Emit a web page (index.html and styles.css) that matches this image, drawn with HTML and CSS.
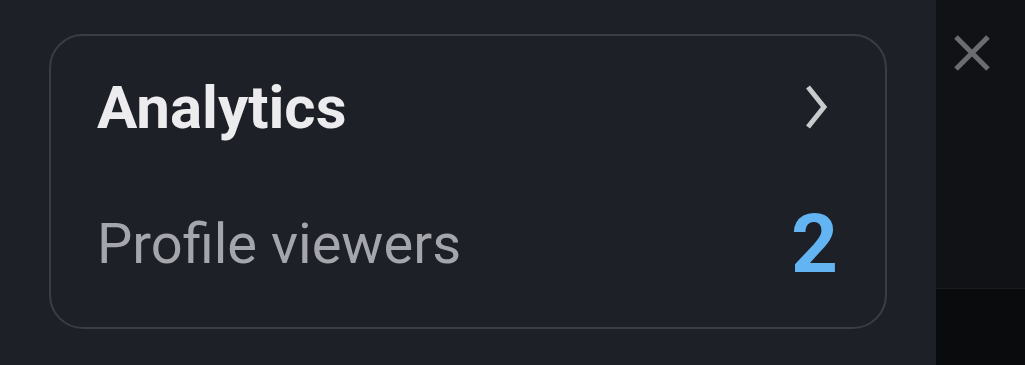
FILE: index.html
```html
<!DOCTYPE html>
<html lang="en">
<head>
  <meta charset="UTF-8">
  <meta name="viewport" content="width=device-width, initial-scale=1.0">
  <title>Analytics</title>
  <link rel="stylesheet" href="styles.css">
</head>
<body>

  <div class="panel">
    <div class="card">
      <a class="row row-title" href="#">
        <span class="title">Analytics</span>
        <svg class="chevron" width="24" height="46" viewBox="0 0 24 46">
          <path d="M4 3 L20 23 L4 43" fill="none" stroke="#c9cacc" stroke-width="5"/>
        </svg>
      </a>
      <div class="row row-stat">
        <span class="label">Profile viewers</span>
        <span class="count">2</span>
      </div>
    </div>
  </div>

  <div class="side">
    <div class="side-top">
      <button class="close" aria-label="Close">
        <svg width="38" height="38" viewBox="0 0 38 38">
          <path d="M3 3 L35 35 M35 3 L3 35" stroke="#6a6c70" stroke-width="5"/>
        </svg>
      </button>
    </div>
    <div class="side-bottom"></div>
  </div>

</body>
</html>
```

FILE: styles.css
```css
body {
  margin: 0;
  height: 365px;
  display: flex;
  font-family: Roboto, "Liberation Sans", sans-serif;
  background-color: #1d2027;
  overflow: hidden;
}

.panel {
  width: 936px;
  padding: 34px 0 0 49px;
  box-sizing: border-box;
}

.card {
  width: 838px;
  height: 295px;
  box-sizing: border-box;
  border: 2px solid #3a3d45;
  border-radius: 34px;
  padding: 0 47px 0 46px;
  display: flex;
  flex-direction: column;
}

.row {
  display: flex;
  justify-content: space-between;
  align-items: center;
  text-decoration: none;
}

.row-title {
  height: 142px;
}

.row-stat {
  height: 132px;
}

.title {
  font-size: 60px;
  font-weight: 700;
  color: #ececee;
}

.chevron {
  margin-right: 10px;
}

.label {
  font-size: 56px;
  color: #a4a6ac;
}

.count {
  font-size: 82px;
  font-weight: 700;
  color: #62b4f2;
}

.side {
  flex: 1;
  display: flex;
  flex-direction: column;
}

.side-top {
  height: 288px;
  background-color: #111216;
  border-bottom: 1px solid #1c1d21;
}

.side-bottom {
  flex: 1;
  background-color: #0a0b0c;
}

.close {
  margin: 34px 0 0 17px;
  padding: 0;
  background: none;
  border: none;
  cursor: pointer;
}
```
